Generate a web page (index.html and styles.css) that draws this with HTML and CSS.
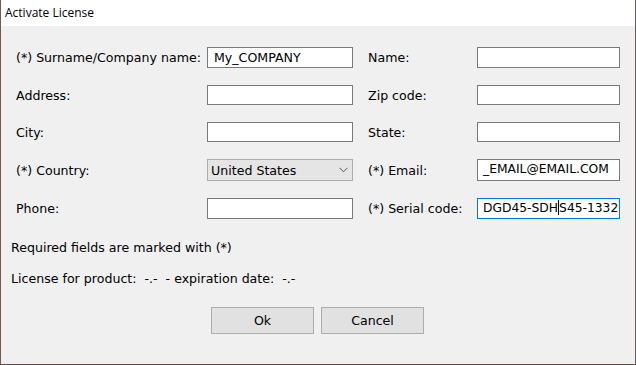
FILE: index.html
```html
<!DOCTYPE html>
<html>
<head>
<meta charset="utf-8">
<title>Activate License</title>
<link rel="stylesheet" href="styles.css">
</head>
<body>
<div class="window">
  <div class="titlebar">Activate License</div>
  <div class="content">
    <div class="form">
      <label class="lbl">(*) Surname/Company name:</label>
      <div class="field">My_COMPANY</div>
      <span></span>
      <label class="lbl">Name:</label>
      <div class="field"></div>

      <label class="lbl">Address:</label>
      <div class="field"></div>
      <span></span>
      <label class="lbl">Zip code:</label>
      <div class="field"></div>

      <label class="lbl">City:</label>
      <div class="field"></div>
      <span></span>
      <label class="lbl">State:</label>
      <div class="field"></div>

      <label class="lbl">(*) Country:</label>
      <div class="select"><span>United States</span><svg class="chev" width="9" height="6" viewBox="0 0 9 6"><path d="M0.5 0.8 L4.5 4.8 L8.5 0.8" fill="none" stroke="#555" stroke-width="1"/></svg></div>
      <span></span>
      <label class="lbl">(*) Email:</label>
      <div class="field tight">_EMAIL@EMAIL.COM</div>

      <label class="lbl">Phone:</label>
      <div class="field"></div>
      <span></span>
      <label class="lbl">(*) Serial code:</label>
      <div class="field tight focus">DGD45-SDH<span class="caret"></span>S45-1332</div>
    </div>
    <p class="note">Required fields are marked with (*)</p>
    <p class="note lic">License for product:&nbsp; -.-&nbsp; - expiration date:&nbsp; -.-</p>
    <div class="buttons">
      <button class="btn">Ok</button>
      <button class="btn">Cancel</button>
    </div>
  </div>
</div>
</body>
</html>
```
FILE: styles.css
```css
html, body {
  margin: 0;
  padding: 0;
  width: 636px;
  height: 365px;
  overflow: hidden;
  background: #f0f0f0;
}
.window {
  box-sizing: border-box;
  width: 636px;
  height: 365px;
  border-left: 1px solid #6e5d50;
  border-right: 1px solid #6e5d50;
  border-bottom: 1px solid #5a4e46;
  display: flex;
  flex-direction: column;
  font-family: "DejaVu Sans", Verdana, sans-serif;
  font-size: 12.6px;
  color: #000;
}
.titlebar {
  height: 26px;
  line-height: 25px;
  background: #fff;
  padding-left: 4px;
  font-family: "Open Sans", "Noto Sans", sans-serif;
  font-size: 12px;
}
.content {
  flex: 1;
  background: #f0f0f0;
  padding: 21px 0 0 10px;
}
.form {
  margin-left: 5px;
  display: grid;
  grid-template-columns: 191px 146px 15px 109px 143px;
  grid-template-rows: 21px 20px 20px 22px 21px;
  row-gap: 17px;
  align-items: center;
}
.lbl {
  white-space: nowrap;
}
.field {
  box-sizing: border-box;
  height: 100%;
  background: #fff;
  border: 1px solid #7a7a7a;
  padding: 0 6px;
  line-height: 19px;
  white-space: nowrap;
  overflow: hidden;
}
.field.tight {
  padding: 0 0 0 5px;
  font-size: 12.3px;
}
.field.focus {
  border-color: #0078d7;
}
.caret {
  display: inline-block;
  width: 1px;
  height: 15px;
  background: #000;
  vertical-align: -3px;
}
.select {
  box-sizing: border-box;
  height: 100%;
  background: #e5e5e5;
  border: 1px solid #adadad;
  padding: 0 4px 0 3px;
  display: flex;
  align-items: center;
  justify-content: space-between;
}
.chev {
  display: block;
}
.note {
  margin: 0;
  line-height: 15px;
}
.form + .note {
  margin-top: 21px;
}
.lic {
  margin-top: 16px;
}
.buttons {
  margin: 21px 0 0 200px;
  display: flex;
  gap: 7px;
}
.btn {
  box-sizing: border-box;
  width: 103px;
  height: 27px;
  background: #e1e1e1;
  border: 1px solid #adadad;
  font-family: "DejaVu Sans", Verdana, sans-serif;
  font-size: 12.6px;
  color: #000;
  padding: 0;
}
```
